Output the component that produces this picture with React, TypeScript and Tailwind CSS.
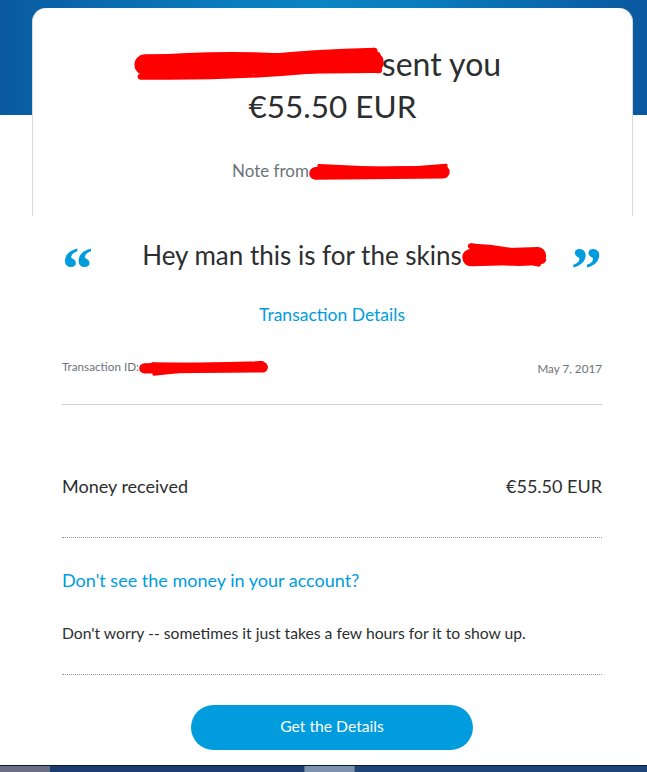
import type { ReactNode } from 'react'

const font = { fontFamily: 'Lato, "Noto Sans", Arial, sans-serif' }

// hand-drawn looking red redaction: a thick core plus messy back-and-forth sweeps
function Scribble({ w, h, passes, seed = 1, className = '' }: { w: number; h: number; passes: number; seed?: number; className?: string }) {
  let s = seed * 9301 + 49297
  const rnd = () => {
    s = (s * 9301 + 49297) % 233280
    return s / 233280
  }
  const strokes: ReactNode[] = []
  let x = 3 + rnd() * 10
  let d = `M ${x} ${h * 0.4}`
  for (let i = 0; i < passes; i++) {
    const goingRight = i % 2 === 0
    const tx = goingRight ? w - 3 - rnd() * 12 : 3 + rnd() * 14
    const ty = h * 0.12 + rnd() * h * 0.76
    const cy = h * 0.05 + rnd() * h * 0.9
    d += ` Q ${(x + tx) / 2} ${cy} ${tx} ${ty}`
    x = tx
  }
  strokes.push(
    <path
      key="core"
      d={`M ${h * 0.3} ${h * 0.52} L ${w - h * 0.35} ${h * 0.46}`}
      fill="none"
      stroke="#ff0000"
      strokeWidth={h * 0.58}
      strokeLinecap="round"
    />
  )
  strokes.push(<path key="a" d={d} fill="none" stroke="#ff0000" strokeWidth={h / 6} strokeLinecap="round" strokeLinejoin="round" />)
  return (
    <svg width={w} height={h} viewBox={`0 0 ${w} ${h}`} className={`inline-block align-middle ${className}`}>
      {strokes}
    </svg>
  )
}

function Quote({ ch }: { ch: string }) {
  return (
    <span
      style={{ fontFamily: '"Liberation Serif", "DejaVu Serif", serif' }}
      className="block h-[32px] text-[62px] font-bold leading-[56px] text-[#009cde]"
    >
      {ch}
    </span>
  )
}

export default function App() {
  return (
    <div
      style={font}
      className="flex min-h-[772px] w-[647px] flex-col bg-white bg-[linear-gradient(90deg,#0a5aa0_0%,#0a7cbe_35%,#0a84c4_50%,#0a7cbe_65%,#0a58a0_100%)] bg-[length:100%_115px] bg-no-repeat pt-2"
    >
      <div className="ml-[32px] w-[601px] rounded-t-[14px] border-x border-[#d9d9d9] bg-white pb-[32px] pt-[34px] text-center">
        <div className="text-[32px] leading-[43px] text-[#2c2e2f]">
          <Scribble w={252} h={36} passes={13} seed={3} className="-mt-2 mr-[-4px]" />
          <span className="mr-[30px]">sent you</span>
        </div>
        <div className="text-[31.5px] leading-[43px] text-[#2c2e2f]">€55.50 EUR</div>
        <div className="mt-[31px] text-[17px] leading-[24px] text-[#6c7378]">
          <span className="ml-[18px]">Note from</span>
          <Scribble w={142} h={22} passes={9} seed={7} />
        </div>
      </div>

      <div className="ml-[62px] w-[540px]">
        <div className="mt-[24px] flex h-[32px] items-center justify-between">
          <Quote ch="“" />
          <span className="ml-[26px] text-[26px] leading-[32px] text-[#2c2e2f]">
            Hey man this is for the skins
            <Scribble w={86} h={30} passes={8} seed={5} className="-mt-1" />
          </span>
          <Quote ch="”" />
        </div>

        <div className="mt-[31px] text-center text-[17.5px] leading-[24px] text-[#009cde]">Transaction Details</div>

        <div className="mt-[33px] flex h-[16px] items-center justify-between text-[11.7px] leading-[16px] text-[#6c7378]">
          <span>
            Transaction ID:
            <Scribble w={130} h={18} passes={6} seed={11} />
          </span>
          <span>May 7, 2017</span>
        </div>

        <div className="mt-[28px] border-t border-[#d0d0d0]" />

        <div className="mt-[69px] flex items-center justify-between text-[18px] leading-[24px] text-[#2c2e2f]">
          <span>Money received</span>
          <span>€55.50 EUR</span>
        </div>

        <div className="mt-[39px] border-t border-dotted border-[#9a9a9a]" />

        <div className="mt-[30px] text-[18px] leading-[24px] text-[#009cde]">Don't see the money in your account?</div>

        <div className="mt-[30px] text-[15.7px] leading-[22px] text-[#2c2e2f]">
          Don't worry -- sometimes it just takes a few hours for it to show up.
        </div>

        <div className="mt-[30px] border-t border-dotted border-[#9a9a9a]" />

        <div className="mt-[30px] flex justify-center">
          <button className="h-[45px] w-[282px] rounded-full bg-[#009cde] text-[15.7px] text-white">Get the Details</button>
        </div>
      </div>

      <div className="mt-auto flex h-[7px] border-t border-[#0c1a33] bg-[#1d3f72]">
        <div className="w-[50px] border-r border-[#5b6f8f] bg-[#6a6f86]" />
        <div className="w-[255px] border-r border-[#5b6f8f] bg-[#1c3b6e]" />
        <div className="w-[50px] border-r border-[#5b6f8f] bg-[#7d93ad]" />
        <div className="flex-1 bg-[#1f4478]" />
      </div>
    </div>
  )
}
